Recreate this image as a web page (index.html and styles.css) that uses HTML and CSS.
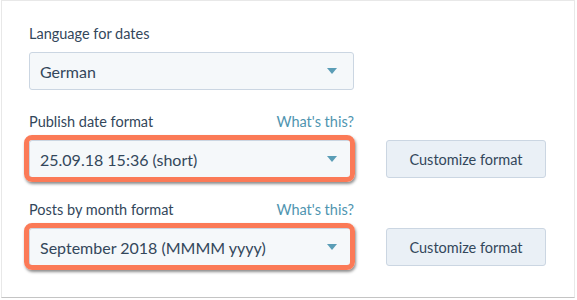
FILE: index.html
```html
<!DOCTYPE html>
<html lang="en">
<head>
  <meta charset="UTF-8" />
  <title>Blog date settings</title>
  <link rel="stylesheet" href="styles.css">
</head>
<body>
  <div class="card">
    <!-- Language -->
    <div class="field">
      <div class="field-label">
        <span>Language for dates</span>
      </div>
      <div class="field-row">
        <div class="select"><span>German</span><span class="caret"></span></div>
      </div>
    </div>

    <!-- Publish date -->
    <div class="field">
      <div class="field-label">
        <span>Publish date format</span>
        <a href="#" class="help-link">What's this?</a>
      </div>
      <div class="field-row">
        <div class="select highlight"><span>25.09.18 15:36 (short)</span><span class="caret"></span></div>
        <button type="button" class="custom-button">Customize format</button>
      </div>
    </div>

    <!-- Posts by month -->
    <div class="field">
      <div class="field-label">
        <span>Posts by month format</span>
        <a href="#" class="help-link">What's this?</a>
      </div>
      <div class="field-row">
        <div class="select highlight"><span>September 2018 (MMMM yyyy)</span><span class="caret"></span></div>
        <button type="button" class="custom-button">Customize format</button>
      </div>
    </div>
  </div>
</body>
</html>
```

FILE: styles.css
```css
* {
  box-sizing: border-box;
}

body {
  margin: 0;
  padding: 0;
  background: #fff;
  font-family: Lato, 'Open Sans', sans-serif;
  color: #33475b;
}

.card {
  width: 574px;
  height: 298px;
  margin-left: 1px;
  padding: 23px 0 0 27px;
  background: #fff;
  border: 1px solid #e8e8e8;
  border-bottom-color: #c4c4c4;
}

.field {
  margin-bottom: 22px;
}

.field-label {
  width: 325px;
  display: flex;
  justify-content: space-between;
  font-size: 14.5px;
  line-height: 20px;
  margin-bottom: 8px;
}

.help-link {
  color: #4f95b0;
  text-decoration: none;
}

.field-row {
  display: flex;
  align-items: center;
  gap: 32px;
}

.select {
  position: relative;
  width: 325px;
  height: 38px;
  padding: 0 10px;
  display: flex;
  align-items: center;
  justify-content: space-between;
  background: #f5f8fa;
  border: 1px solid #cbd6e2;
  border-radius: 3px;
  font-size: 16px;
}

.caret {
  width: 0;
  height: 0;
  margin-right: 6px;
  border-left: 5px solid transparent;
  border-right: 5px solid transparent;
  border-top: 6px solid #5a9db6;
}

.select.highlight::after {
  content: "";
  position: absolute;
  top: -6px;
  bottom: -5px;
  left: -6px;
  right: -2px;
  border: 5px solid #fb7a57;
  border-radius: 8px;
  box-shadow: 1px 2px 3px rgba(0, 0, 0, 0.45);
  pointer-events: none;
}

.custom-button {
  width: 160px;
  height: 38px;
  padding: 0;
  background: #eaf0f6;
  border: 1px solid #cbd6e2;
  border-radius: 3px;
  font-family: Lato, 'Open Sans', sans-serif;
  font-size: 14.5px;
  color: #33475b;
  cursor: pointer;
}
```
